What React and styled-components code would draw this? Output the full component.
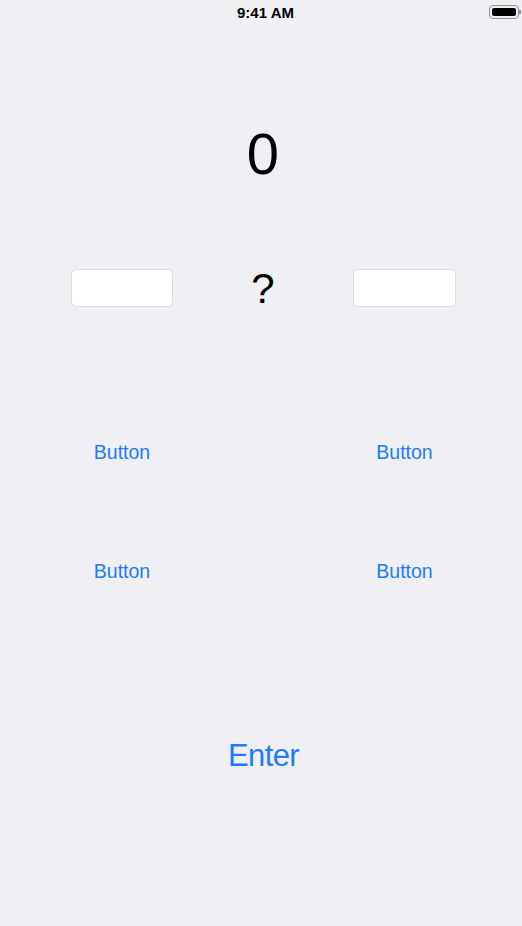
import React from "react";
import styled, { createGlobalStyle } from "styled-components";

const Global = createGlobalStyle`
  html, body { margin: 0; padding: 0; background: #efeff4; }
  body { font-family: "Liberation Sans", Arial, sans-serif; }
  * { box-sizing: border-box; }
`;

const Screen = styled.div`
  width: 522px;
  height: 926px;
  background: #efeff4;
  display: flex;
  flex-direction: column;
  overflow: hidden;
  font-family: "Liberation Sans", Arial, sans-serif;
`;

const StatusBar = styled.div`
  position: relative;
  height: 25px;
  display: flex;
  justify-content: center;
  padding-left: 9px;
`;

const Time = styled.div`
  font-size: 15px;
  font-weight: 700;
  line-height: 25px;
  color: #000;
`;

const Battery = styled.div`
  position: absolute;
  top: 5px;
  left: 489px;
  width: 30px;
  height: 14px;
  border: 1px solid #8e8e93;
  border-radius: 4px;
  padding: 2px;
  &::after {
    content: "";
    position: absolute;
    right: -3px;
    top: 4px;
    width: 2px;
    height: 4px;
    background: #8e8e93;
    border-radius: 0 1px 1px 0;
  }
`;

const BatteryFill = styled.div`
  width: 100%;
  height: 100%;
  background: #000;
  border-radius: 2px;
`;

const Display = styled.div`
  margin-top: 100px;
  font-size: 58px;
  line-height: 58px;
  text-align: center;
  padding-left: 4px;
  color: #000;
`;

const CompareRow = styled.div`
  margin-top: 86px;
  display: flex;
  align-items: center;
  justify-content: space-between;
  padding: 0 66px 0 71px;
  height: 38px;
`;

const Field = styled.input`
  width: ${(p) => p.$w}px;
  height: 38px;
  background: #fff;
  border: 1px solid #dcdce0;
  border-radius: 5px;
  outline: none;
  padding: 0 6px;
  font-size: 16px;
  font-family: inherit;
`;

const Operator = styled.div`
  font-size: 42px;
  line-height: 38px;
  padding-top: 2px;
  color: #000;
`;

const ButtonRow = styled.div`
  margin-top: ${(p) => p.$top}px;
  display: flex;
  justify-content: space-between;
  padding: 0 66px 0 71px;
`;

const TextButton = styled.button`
  width: ${(p) => p.$w}px;
  background: none;
  border: none;
  padding: 0;
  font-family: inherit;
  font-size: 19.5px;
  line-height: 24px;
  color: #1f7cf8;
  text-align: center;
  cursor: pointer;
`;

const EnterButton = styled.button`
  margin-top: 155px;
  align-self: center;
  margin-left: 5px;
  background: none;
  border: none;
  padding: 0;
  font-family: inherit;
  font-size: 31px;
  line-height: 36px;
  letter-spacing: -0.6px;
  color: #1f7cf8;
  cursor: pointer;
`;

export default function App() {
  return (
    <>
      <Global />
      <Screen>
        <StatusBar>
          <Time>9:41 AM</Time>
          <Battery>
            <BatteryFill />
          </Battery>
        </StatusBar>
        <Display>0</Display>
        <CompareRow>
          <Field $w={102} />
          <Operator>?</Operator>
          <Field $w={103} />
        </CompareRow>
        <ButtonRow $top={133}>
          <TextButton $w={102}>Button</TextButton>
          <TextButton $w={103}>Button</TextButton>
        </ButtonRow>
        <ButtonRow $top={95}>
          <TextButton $w={102}>Button</TextButton>
          <TextButton $w={103}>Button</TextButton>
        </ButtonRow>
        <EnterButton>Enter</EnterButton>
      </Screen>
    </>
  );
}
